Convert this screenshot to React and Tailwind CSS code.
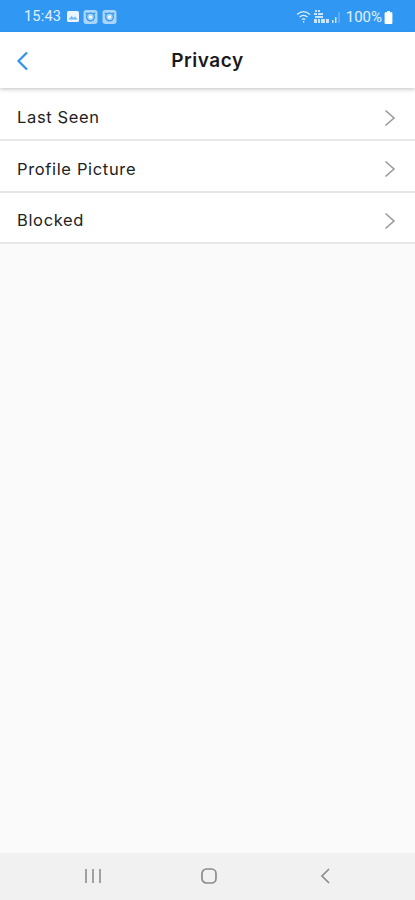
const FONT = "font-['Inter','Liberation_Sans',sans-serif]";

function StatusBar() {
  return (
    <div className="h-8 shrink-0 bg-[#3097f3] flex items-center justify-between pl-6 pr-[22px] pt-[2px] text-white/85">
      <div className="flex items-center gap-[6px]">
        <span className="text-[14.5px] leading-none font-['Roboto',sans-serif] tracking-[0.2px] mt-px">15:43</span>
        <svg width="12" height="11" viewBox="0 0 12 11" className="mt-[-2px]">
          <rect x="0" y="0" width="12" height="11" rx="1.5" fill="#fff" opacity="0.9" />
          <path d="M1.5 8.5 4.5 5l2 2 1.5-1.5 2.5 3z" fill="#6db5f5" />
        </svg>
        <div className="flex items-center gap-1 ml-[-2px]">
          <Badge />
          <Badge />
        </div>
      </div>
      <div className="flex items-center">
        <svg width="16" height="14" viewBox="0 0 16 14" fill="none" stroke="#fff" strokeOpacity="0.85" strokeWidth="1.2">
          <path d="M1 4.5C5 1 10 1 14 4.5" />
          <path d="M3.5 7C6.2 4.8 9 4.8 11.6 7" />
          <path d="M6 9.500c1-.9 2.200-.9 3.200 0" />
          <circle cx="7.600" cy="11.800" r="0.8" fill="#fff" stroke="none" />
        </svg>
        <svg width="30" height="16" viewBox="0 0 30 16" className="ml-px" fill="#fff" fillOpacity="0.75">
          <rect x="2" y="1" width="2" height="2" />
          <rect x="5" y="1" width="2" height="2" />
          <rect x="1" y="4" width="3" height="2" />
          <rect x="5" y="4" width="5" height="2" />
          <rect x="2" y="7" width="8" height="2" />
          <rect x="1" y="10" width="3" height="4" />
          <rect x="5" y="10" width="2" height="4" />
          <rect x="8" y="10" width="4" height="4" />
          <rect x="13" y="10" width="3" height="4" />
          <rect x="19" y="11" width="1.5" height="3" />
          <rect x="22" y="8" width="1.5" height="6" />
          <rect x="25.5" y="3" width="1" height="11" fillOpacity="0.4" />
        </svg>
        <span className="ml-[3px] text-[15px] leading-none font-['Roboto',sans-serif] mt-px">100%</span>
        <svg width="9" height="13" viewBox="0 0 9 13" className="ml-[2px]">
          <path d="M3 0h3v1.2h1.4a1 1 0 0 1 1 1V12a1 1 0 0 1-1 1H1.6a1 1 0 0 1-1-1V2.2a1 1 0 0 1 1-1H3z" fill="#fff" />
        </svg>
      </div>
    </div>
  );
}

function Badge() {
  return (
    <svg width="15" height="14" viewBox="0 0 14 13" fill="none">
      <rect x="0.5" y="0" width="13" height="13" rx="2.5" fill="#fff" fillOpacity="0.6" />
      <circle cx="7" cy="6.5" r="3.6" stroke="#3097f3" strokeWidth="1.2" />
      <circle cx="7" cy="6.5" r="1.4" fill="#fff" />
      <circle cx="3.4" cy="3.2" r="1" fill="#3097f3" />
      <circle cx="10.6" cy="3.2" r="1" fill="#3097f3" />
    </svg>
  );
}

function Row({ label }) {
  return (
    <div className="h-[51.5px] bg-white border-b-2 border-[#e8e8e8] flex items-center justify-between pl-[17px] pr-[19px] pt-[7px]">
      <span className="text-[16.5px] tracking-[0.65px] text-[#222]">{label}</span>
      <svg width="12" height="18" viewBox="0 0 12 18" fill="none" stroke="#999" strokeWidth="1.6">
        <path d="M1.5 1.5 10 9l-8.500 7.500" />
      </svg>
    </div>
  );
}

export default function App() {
  return (
    <div className={`${FONT} h-[900px] w-[415px] flex flex-col bg-[#fafafa] overflow-hidden`}>
      <StatusBar />
      <div className="relative z-10 h-14 shrink-0 bg-white shadow-[0_2px_4px_rgba(0,0,0,0.16)] flex items-center justify-center">
        <svg width="13" height="20" viewBox="0 0 13 20" fill="none" stroke="#2f93ea" strokeWidth="2.2" className="absolute left-4 top-[19px]">
          <path d="M11 1.500 2.500 10 11 18.500" />
        </svg>
        <h1 className="text-[19px] font-semibold tracking-[0.55px] text-[#1a1a1a] mt-[3px]">Privacy</h1>
      </div>
      <div className="pt-[1.5px]">
        <Row label="Last Seen" />
        <Row label="Profile Picture" />
        <Row label="Blocked" />
      </div>
      <div className="flex-1" />
      <div className="h-[47px] shrink-0 bg-[#f1f1f1] flex items-center justify-between pl-[84px] pr-[84px] pb-[2px]">
        <svg width="18" height="16" viewBox="0 0 18 16" stroke="#8c8c8c" strokeWidth="1.6">
          <path d="M2 1v14M9 1v14M16 1v14" />
        </svg>
        <svg width="18" height="18" viewBox="0 0 18 18" fill="none" stroke="#8c8c8c" strokeWidth="1.7" className="ml-[-3px]">
          <rect x="2" y="2" width="14" height="14" rx="4.5" />
        </svg>
        <svg width="12" height="18" viewBox="0 0 12 18" fill="none" stroke="#8c8c8c" strokeWidth="1.7">
          <path d="M10 2 3 9l7 7" />
        </svg>
      </div>
    </div>
  );
}
